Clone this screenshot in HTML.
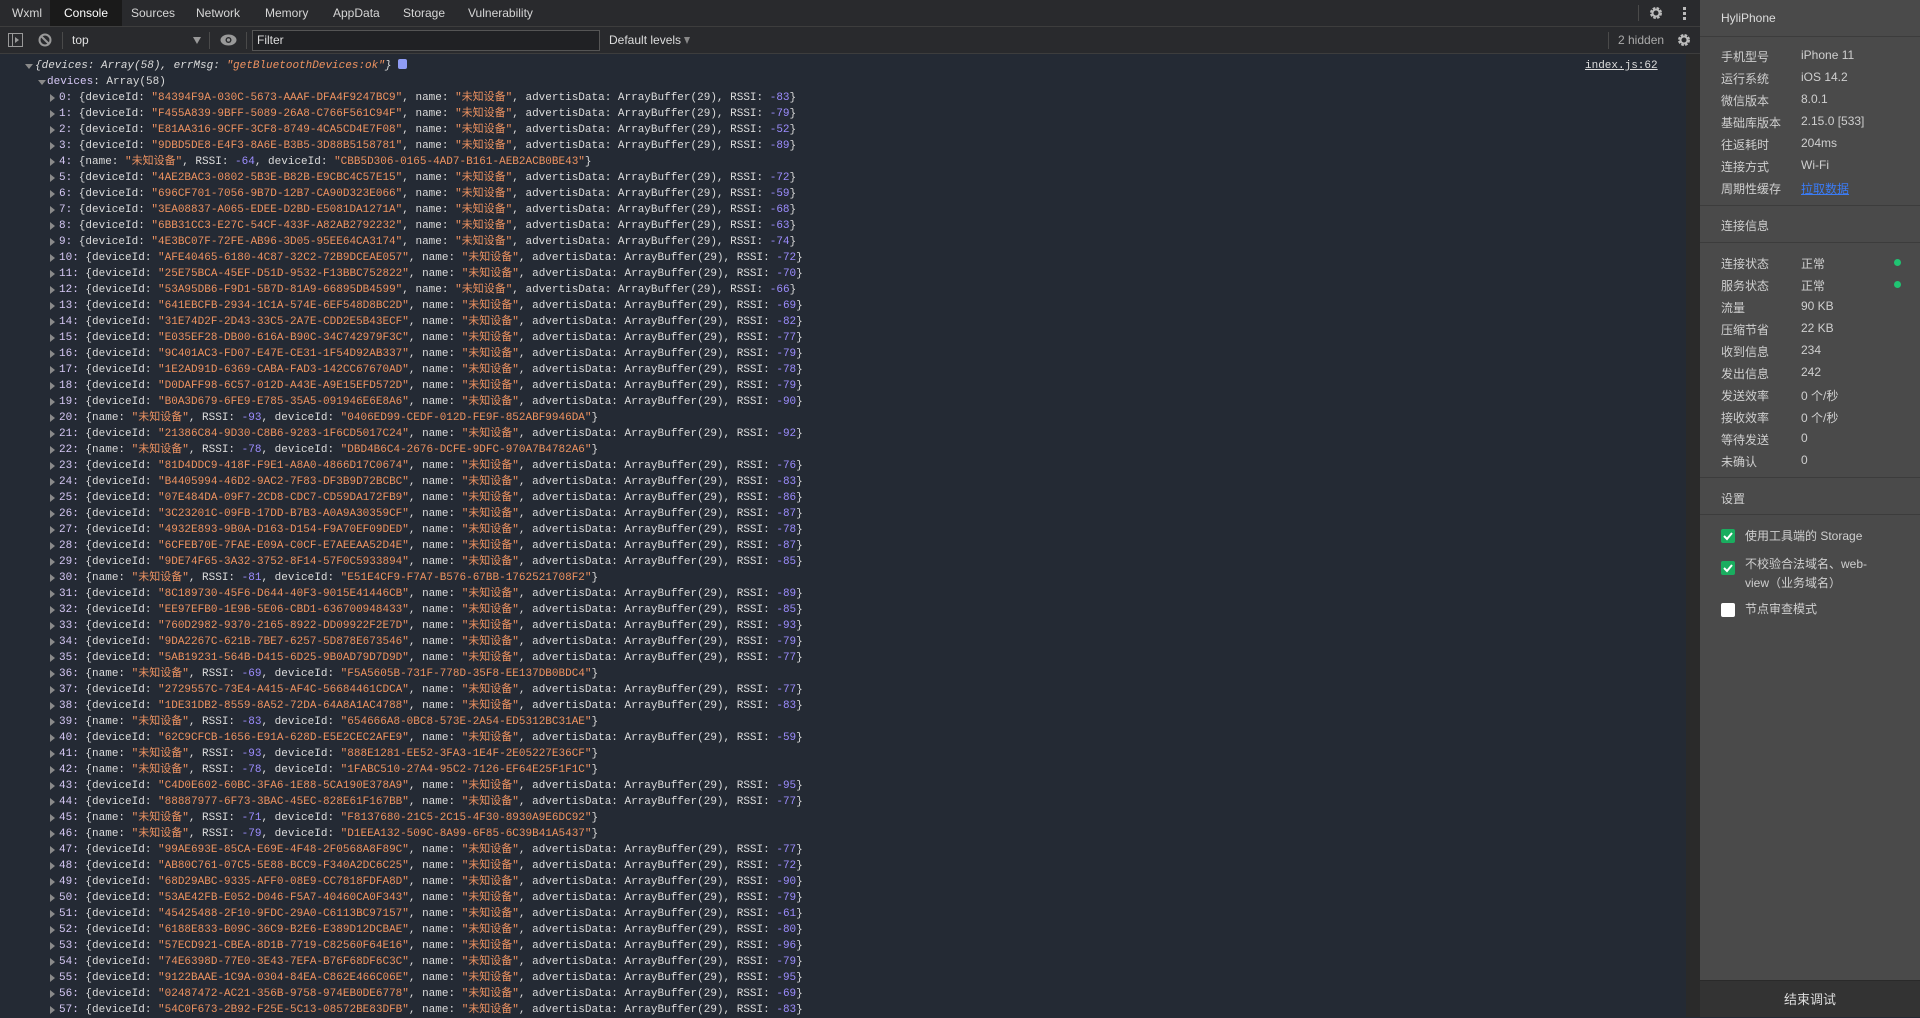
<!DOCTYPE html>
<html><head><meta charset="utf-8"><style>
*{margin:0;padding:0;box-sizing:border-box}
body{width:1920px;height:1017px;overflow:hidden;background:#242a34;font-family:"Liberation Sans","Noto Sans CJK SC",sans-serif;position:relative}
.tabs{position:absolute;left:0;top:0;width:1700px;height:27px;background:#292a2d;border-bottom:1px solid #3d3d3d}
.tab{position:absolute;top:0;height:26px;line-height:27px;font-size:12px;color:#d6d6d6}
.tb{position:absolute;left:0;top:27px;width:1700px;height:27px;background:#292a2d;border-bottom:1px solid #3d3d3d}
.div{position:absolute;width:1px;background:#4a4a4a}
.con{position:absolute;left:0;top:58px;width:1686px;font-family:"Liberation Mono","Noto Sans CJK SC",monospace;font-size:11px;color:#dcdcdc}
.r{height:16px;line-height:16px;white-space:pre;position:relative;padding-left:59px}
.r:before{content:"";position:absolute;left:50px;top:4px;border-left:5px solid #8a8a8a;border-top:4px solid transparent;border-bottom:4px solid transparent}
.i{color:#d6c8f5}.s{color:#ee9260}.n{color:#9d8dff}
.sb{position:absolute;left:1686px;top:54px;width:14px;height:963px;background:#2a2a2a}
.side{position:absolute;left:1700px;top:0;width:220px;height:1017px;background:#4a4a4a;font-size:12px;color:#cfcfcf}
.side .l{position:absolute;left:21px}
.side .v{position:absolute;left:101px}
.hr{position:absolute;left:0;width:220px;height:1px;background:#3c3c3c}
.dot{position:absolute;left:194px;width:7px;height:7px;border-radius:50%;background:#1fc472}
.cb{position:absolute;left:21px;width:14px;height:14px;border-radius:2px;background:#1aad5f}
.cb.w{background:#fff}
</style></head><body>
<div class="tabs">
<div class="tab" style="left:12px">Wxml</div>
<div class="tab" style="left:50px;width:72px;background:#1a1a1a;text-align:center;color:#fff">Console</div>
<div class="tab" style="left:131px">Sources</div>
<div class="tab" style="left:196px">Network</div>
<div class="tab" style="left:265px">Memory</div>
<div class="tab" style="left:333px">AppData</div>
<div class="tab" style="left:403px">Storage</div>
<div class="tab" style="left:468px">Vulnerability</div>
<div class="div" style="left:1638px;top:5px;height:16px"></div>
<svg style="position:absolute;left:1649px;top:6px" width="14" height="14" viewBox="0 0 14 14"><circle cx="7" cy="7" r="4.5" fill="none" stroke="#bbb" stroke-width="3" stroke-dasharray="2.4 1.2"/><circle cx="7" cy="7" r="3.5" fill="none" stroke="#bbb" stroke-width="2"/></svg>
<div style="position:absolute;left:1683px;top:7px;width:3px;height:3px;background:#bbb;box-shadow:0 5px #bbb,0 10px #bbb"></div>
</div>
<div class="tb">
<svg style="position:absolute;left:8px;top:6px" width="15" height="14" viewBox="0 0 15 14"><rect x="0.5" y="0.5" width="14" height="13" fill="none" stroke="#999"/><line x1="4.5" y1="0" x2="4.5" y2="14" stroke="#999"/><path d="M7 4l4 3-4 3z" fill="#999"/></svg>
<svg style="position:absolute;left:38px;top:6px" width="14" height="14" viewBox="0 0 14 14"><circle cx="7" cy="7" r="5.5" fill="none" stroke="#999" stroke-width="2"/><line x1="3" y1="3" x2="11" y2="11" stroke="#999" stroke-width="2"/></svg>
<div class="div" style="left:62px;top:5px;height:17px"></div>
<div style="position:absolute;left:72px;top:6px;font-size:12px;color:#e0e0e0">top</div>
<div style="position:absolute;left:193px;top:10px;border-top:7px solid #999;border-left:4px solid transparent;border-right:4px solid transparent"></div>
<div class="div" style="left:209px;top:5px;height:17px"></div>
<svg style="position:absolute;left:220px;top:7px" width="17" height="12" viewBox="0 0 17 12"><ellipse cx="8.5" cy="6" rx="8" ry="5.5" fill="#999"/><circle cx="8.5" cy="6" r="3" fill="#292a2d"/><circle cx="8.5" cy="6" r="1.6" fill="#999"/></svg>
<div class="div" style="left:246px;top:5px;height:17px"></div>
<div style="position:absolute;left:252px;top:3px;width:348px;height:21px;border:1px solid #555;background:#202124;font-size:12px;color:#ddd;padding-left:4px;line-height:19px">Filter</div>
<div style="position:absolute;left:609px;top:6px;font-size:12px;color:#ddd">Default levels</div>
<div style="position:absolute;left:684px;top:10px;border-top:7px solid #888;border-left:3.5px solid transparent;border-right:3.5px solid transparent"></div>
<div class="div" style="left:1608px;top:5px;height:17px"></div>
<div style="position:absolute;left:1618px;top:6px;font-size:12px;color:#aaa">2 hidden</div>
<svg style="position:absolute;left:1677px;top:6px" width="14" height="14" viewBox="0 0 14 14"><circle cx="7" cy="7" r="4.5" fill="none" stroke="#bbb" stroke-width="3" stroke-dasharray="2.4 1.2"/><circle cx="7" cy="7" r="3.5" fill="none" stroke="#bbb" stroke-width="2"/></svg>
</div>
<div class="sb"></div>
<div style="position:absolute;left:1585px;top:58px;font-family:'Liberation Mono',monospace;font-size:11px;line-height:16px;color:#ddd;text-decoration:underline">index.js:62</div>
<div class="con">
<div style="height:16px;line-height:16px;white-space:pre;padding-left:35px;position:relative;font-style:italic"><span style="position:absolute;left:25px;top:6px;border-top:5px solid #8a8a8a;border-left:4px solid transparent;border-right:4px solid transparent"></span>{devices: Array(58), errMsg: <span class="s">"getBluetoothDevices:ok"</span>} <span style="display:inline-block;width:9px;height:10px;background:#8f9cf5;border-radius:2px;vertical-align:-1px"></span></div>
<div style="height:16px;line-height:16px;white-space:pre;padding-left:47px;position:relative"><span style="position:absolute;left:38px;top:6px;border-top:5px solid #8a8a8a;border-left:4px solid transparent;border-right:4px solid transparent"></span><span class="i">devices</span>: Array(58)</div>
<div class="r"><span class="i">0:</span> {deviceId: <span class="s">"84394F9A-030C-5673-AAAF-DFA4F9247BC9"</span>, name: <span class="s">"未知设备"</span>, advertisData: ArrayBuffer(29), RSSI: <span class="n">-83</span>}</div>
<div class="r"><span class="i">1:</span> {deviceId: <span class="s">"F455A839-9BFF-5089-26A8-C766F561C94F"</span>, name: <span class="s">"未知设备"</span>, advertisData: ArrayBuffer(29), RSSI: <span class="n">-79</span>}</div>
<div class="r"><span class="i">2:</span> {deviceId: <span class="s">"E81AA316-9CFF-3CF8-8749-4CA5CD4E7F08"</span>, name: <span class="s">"未知设备"</span>, advertisData: ArrayBuffer(29), RSSI: <span class="n">-52</span>}</div>
<div class="r"><span class="i">3:</span> {deviceId: <span class="s">"9DBD5DE8-E4F3-8A6E-B3B5-3D88B5158781"</span>, name: <span class="s">"未知设备"</span>, advertisData: ArrayBuffer(29), RSSI: <span class="n">-89</span>}</div>
<div class="r"><span class="i">4:</span> {name: <span class="s">"未知设备"</span>, RSSI: <span class="n">-64</span>, deviceId: <span class="s">"CBB5D306-0165-4AD7-B161-AEB2ACB0BE43"</span>}</div>
<div class="r"><span class="i">5:</span> {deviceId: <span class="s">"4AE2BAC3-0802-5B3E-B82B-E9CBC4C57E15"</span>, name: <span class="s">"未知设备"</span>, advertisData: ArrayBuffer(29), RSSI: <span class="n">-72</span>}</div>
<div class="r"><span class="i">6:</span> {deviceId: <span class="s">"696CF701-7056-9B7D-12B7-CA90D323E066"</span>, name: <span class="s">"未知设备"</span>, advertisData: ArrayBuffer(29), RSSI: <span class="n">-59</span>}</div>
<div class="r"><span class="i">7:</span> {deviceId: <span class="s">"3EA08837-A065-EDEE-D2BD-E5081DA1271A"</span>, name: <span class="s">"未知设备"</span>, advertisData: ArrayBuffer(29), RSSI: <span class="n">-68</span>}</div>
<div class="r"><span class="i">8:</span> {deviceId: <span class="s">"6BB31CC3-E27C-54CF-433F-A82AB2792232"</span>, name: <span class="s">"未知设备"</span>, advertisData: ArrayBuffer(29), RSSI: <span class="n">-63</span>}</div>
<div class="r"><span class="i">9:</span> {deviceId: <span class="s">"4E3BC07F-72FE-AB96-3D05-95EE64CA3174"</span>, name: <span class="s">"未知设备"</span>, advertisData: ArrayBuffer(29), RSSI: <span class="n">-74</span>}</div>
<div class="r"><span class="i">10:</span> {deviceId: <span class="s">"AFE40465-6180-4C87-32C2-72B9DCEAE057"</span>, name: <span class="s">"未知设备"</span>, advertisData: ArrayBuffer(29), RSSI: <span class="n">-72</span>}</div>
<div class="r"><span class="i">11:</span> {deviceId: <span class="s">"25E75BCA-45EF-D51D-9532-F13BBC752822"</span>, name: <span class="s">"未知设备"</span>, advertisData: ArrayBuffer(29), RSSI: <span class="n">-70</span>}</div>
<div class="r"><span class="i">12:</span> {deviceId: <span class="s">"53A95DB6-F9D1-5B7D-81A9-66895DB4599"</span>, name: <span class="s">"未知设备"</span>, advertisData: ArrayBuffer(29), RSSI: <span class="n">-66</span>}</div>
<div class="r"><span class="i">13:</span> {deviceId: <span class="s">"641EBCFB-2934-1C1A-574E-6EF548D8BC2D"</span>, name: <span class="s">"未知设备"</span>, advertisData: ArrayBuffer(29), RSSI: <span class="n">-69</span>}</div>
<div class="r"><span class="i">14:</span> {deviceId: <span class="s">"31E74D2F-2D43-33C5-2A7E-CDD2E5B43ECF"</span>, name: <span class="s">"未知设备"</span>, advertisData: ArrayBuffer(29), RSSI: <span class="n">-82</span>}</div>
<div class="r"><span class="i">15:</span> {deviceId: <span class="s">"E035EF28-DB00-616A-B90C-34C742979F3C"</span>, name: <span class="s">"未知设备"</span>, advertisData: ArrayBuffer(29), RSSI: <span class="n">-77</span>}</div>
<div class="r"><span class="i">16:</span> {deviceId: <span class="s">"9C401AC3-FD07-E47E-CE31-1F54D92AB337"</span>, name: <span class="s">"未知设备"</span>, advertisData: ArrayBuffer(29), RSSI: <span class="n">-79</span>}</div>
<div class="r"><span class="i">17:</span> {deviceId: <span class="s">"1E2AD91D-6369-CABA-FAD3-142CC67670AD"</span>, name: <span class="s">"未知设备"</span>, advertisData: ArrayBuffer(29), RSSI: <span class="n">-78</span>}</div>
<div class="r"><span class="i">18:</span> {deviceId: <span class="s">"D0DAFF98-6C57-012D-A43E-A9E15EFD572D"</span>, name: <span class="s">"未知设备"</span>, advertisData: ArrayBuffer(29), RSSI: <span class="n">-79</span>}</div>
<div class="r"><span class="i">19:</span> {deviceId: <span class="s">"B0A3D679-6FE9-E785-35A5-091946E6E8A6"</span>, name: <span class="s">"未知设备"</span>, advertisData: ArrayBuffer(29), RSSI: <span class="n">-90</span>}</div>
<div class="r"><span class="i">20:</span> {name: <span class="s">"未知设备"</span>, RSSI: <span class="n">-93</span>, deviceId: <span class="s">"0406ED99-CEDF-012D-FE9F-852ABF9946DA"</span>}</div>
<div class="r"><span class="i">21:</span> {deviceId: <span class="s">"21386C84-9D30-C8B6-9283-1F6CD5017C24"</span>, name: <span class="s">"未知设备"</span>, advertisData: ArrayBuffer(29), RSSI: <span class="n">-92</span>}</div>
<div class="r"><span class="i">22:</span> {name: <span class="s">"未知设备"</span>, RSSI: <span class="n">-78</span>, deviceId: <span class="s">"DBD4B6C4-2676-DCFE-9DFC-970A7B4782A6"</span>}</div>
<div class="r"><span class="i">23:</span> {deviceId: <span class="s">"81D4DDC9-418F-F9E1-A8A0-4866D17C0674"</span>, name: <span class="s">"未知设备"</span>, advertisData: ArrayBuffer(29), RSSI: <span class="n">-76</span>}</div>
<div class="r"><span class="i">24:</span> {deviceId: <span class="s">"B4405994-46D2-9AC2-7F83-DF3B9D72BCBC"</span>, name: <span class="s">"未知设备"</span>, advertisData: ArrayBuffer(29), RSSI: <span class="n">-83</span>}</div>
<div class="r"><span class="i">25:</span> {deviceId: <span class="s">"07E484DA-09F7-2CD8-CDC7-CD59DA172FB9"</span>, name: <span class="s">"未知设备"</span>, advertisData: ArrayBuffer(29), RSSI: <span class="n">-86</span>}</div>
<div class="r"><span class="i">26:</span> {deviceId: <span class="s">"3C23201C-09FB-17DD-B7B3-A0A9A30359CF"</span>, name: <span class="s">"未知设备"</span>, advertisData: ArrayBuffer(29), RSSI: <span class="n">-87</span>}</div>
<div class="r"><span class="i">27:</span> {deviceId: <span class="s">"4932E893-9B0A-D163-D154-F9A70EF09DED"</span>, name: <span class="s">"未知设备"</span>, advertisData: ArrayBuffer(29), RSSI: <span class="n">-78</span>}</div>
<div class="r"><span class="i">28:</span> {deviceId: <span class="s">"6CFEB70E-7FAE-E09A-C0CF-E7AEEAA52D4E"</span>, name: <span class="s">"未知设备"</span>, advertisData: ArrayBuffer(29), RSSI: <span class="n">-87</span>}</div>
<div class="r"><span class="i">29:</span> {deviceId: <span class="s">"9DE74F65-3A32-3752-8F14-57F0C5933894"</span>, name: <span class="s">"未知设备"</span>, advertisData: ArrayBuffer(29), RSSI: <span class="n">-85</span>}</div>
<div class="r"><span class="i">30:</span> {name: <span class="s">"未知设备"</span>, RSSI: <span class="n">-81</span>, deviceId: <span class="s">"E51E4CF9-F7A7-B576-67BB-1762521708F2"</span>}</div>
<div class="r"><span class="i">31:</span> {deviceId: <span class="s">"8C189730-45F6-D644-40F3-9015E41446CB"</span>, name: <span class="s">"未知设备"</span>, advertisData: ArrayBuffer(29), RSSI: <span class="n">-89</span>}</div>
<div class="r"><span class="i">32:</span> {deviceId: <span class="s">"EE97EFB0-1E9B-5E06-CBD1-636700948433"</span>, name: <span class="s">"未知设备"</span>, advertisData: ArrayBuffer(29), RSSI: <span class="n">-85</span>}</div>
<div class="r"><span class="i">33:</span> {deviceId: <span class="s">"760D2982-9370-2165-8922-DD09922F2E7D"</span>, name: <span class="s">"未知设备"</span>, advertisData: ArrayBuffer(29), RSSI: <span class="n">-93</span>}</div>
<div class="r"><span class="i">34:</span> {deviceId: <span class="s">"9DA2267C-621B-7BE7-6257-5D878E673546"</span>, name: <span class="s">"未知设备"</span>, advertisData: ArrayBuffer(29), RSSI: <span class="n">-79</span>}</div>
<div class="r"><span class="i">35:</span> {deviceId: <span class="s">"5AB19231-564B-D415-6D25-9B0AD79D7D9D"</span>, name: <span class="s">"未知设备"</span>, advertisData: ArrayBuffer(29), RSSI: <span class="n">-77</span>}</div>
<div class="r"><span class="i">36:</span> {name: <span class="s">"未知设备"</span>, RSSI: <span class="n">-69</span>, deviceId: <span class="s">"F5A5605B-731F-778D-35F8-EE137DB0BDC4"</span>}</div>
<div class="r"><span class="i">37:</span> {deviceId: <span class="s">"2729557C-73E4-A415-AF4C-56684461CDCA"</span>, name: <span class="s">"未知设备"</span>, advertisData: ArrayBuffer(29), RSSI: <span class="n">-77</span>}</div>
<div class="r"><span class="i">38:</span> {deviceId: <span class="s">"1DE31DB2-8559-8A52-72DA-64A8A1AC4788"</span>, name: <span class="s">"未知设备"</span>, advertisData: ArrayBuffer(29), RSSI: <span class="n">-83</span>}</div>
<div class="r"><span class="i">39:</span> {name: <span class="s">"未知设备"</span>, RSSI: <span class="n">-83</span>, deviceId: <span class="s">"654666A8-0BC8-573E-2A54-ED5312BC31AE"</span>}</div>
<div class="r"><span class="i">40:</span> {deviceId: <span class="s">"62C9CFCB-1656-E91A-628D-E5E2CEC2AFE9"</span>, name: <span class="s">"未知设备"</span>, advertisData: ArrayBuffer(29), RSSI: <span class="n">-59</span>}</div>
<div class="r"><span class="i">41:</span> {name: <span class="s">"未知设备"</span>, RSSI: <span class="n">-93</span>, deviceId: <span class="s">"888E1281-EE52-3FA3-1E4F-2E05227E36CF"</span>}</div>
<div class="r"><span class="i">42:</span> {name: <span class="s">"未知设备"</span>, RSSI: <span class="n">-78</span>, deviceId: <span class="s">"1FABC510-27A4-95C2-7126-EF64E25F1F1C"</span>}</div>
<div class="r"><span class="i">43:</span> {deviceId: <span class="s">"C4D0E602-60BC-3FA6-1E88-5CA190E378A9"</span>, name: <span class="s">"未知设备"</span>, advertisData: ArrayBuffer(29), RSSI: <span class="n">-95</span>}</div>
<div class="r"><span class="i">44:</span> {deviceId: <span class="s">"88887977-6F73-3BAC-45EC-828E61F167BB"</span>, name: <span class="s">"未知设备"</span>, advertisData: ArrayBuffer(29), RSSI: <span class="n">-77</span>}</div>
<div class="r"><span class="i">45:</span> {name: <span class="s">"未知设备"</span>, RSSI: <span class="n">-71</span>, deviceId: <span class="s">"F8137680-21C5-2C15-4F30-8930A9E6DC92"</span>}</div>
<div class="r"><span class="i">46:</span> {name: <span class="s">"未知设备"</span>, RSSI: <span class="n">-79</span>, deviceId: <span class="s">"D1EEA132-509C-8A99-6F85-6C39B41A5437"</span>}</div>
<div class="r"><span class="i">47:</span> {deviceId: <span class="s">"99AE693E-85CA-E69E-4F48-2F0568A8F89C"</span>, name: <span class="s">"未知设备"</span>, advertisData: ArrayBuffer(29), RSSI: <span class="n">-77</span>}</div>
<div class="r"><span class="i">48:</span> {deviceId: <span class="s">"AB80C761-07C5-5E88-BCC9-F340A2DC6C25"</span>, name: <span class="s">"未知设备"</span>, advertisData: ArrayBuffer(29), RSSI: <span class="n">-72</span>}</div>
<div class="r"><span class="i">49:</span> {deviceId: <span class="s">"68D29ABC-9335-AFF0-08E9-CC7818FDFA8D"</span>, name: <span class="s">"未知设备"</span>, advertisData: ArrayBuffer(29), RSSI: <span class="n">-90</span>}</div>
<div class="r"><span class="i">50:</span> {deviceId: <span class="s">"53AE42FB-E052-D046-F5A7-40460CA0F343"</span>, name: <span class="s">"未知设备"</span>, advertisData: ArrayBuffer(29), RSSI: <span class="n">-79</span>}</div>
<div class="r"><span class="i">51:</span> {deviceId: <span class="s">"45425488-2F10-9FDC-29A0-C6113BC97157"</span>, name: <span class="s">"未知设备"</span>, advertisData: ArrayBuffer(29), RSSI: <span class="n">-61</span>}</div>
<div class="r"><span class="i">52:</span> {deviceId: <span class="s">"6188E833-B09C-36C9-B2E6-E389D12DCBAE"</span>, name: <span class="s">"未知设备"</span>, advertisData: ArrayBuffer(29), RSSI: <span class="n">-80</span>}</div>
<div class="r"><span class="i">53:</span> {deviceId: <span class="s">"57ECD921-CBEA-8D1B-7719-C82560F64E16"</span>, name: <span class="s">"未知设备"</span>, advertisData: ArrayBuffer(29), RSSI: <span class="n">-96</span>}</div>
<div class="r"><span class="i">54:</span> {deviceId: <span class="s">"74E6398D-77E0-3E43-7EFA-B76F68DF6C3C"</span>, name: <span class="s">"未知设备"</span>, advertisData: ArrayBuffer(29), RSSI: <span class="n">-79</span>}</div>
<div class="r"><span class="i">55:</span> {deviceId: <span class="s">"9122BAAE-1C9A-0304-84EA-C862E466C06E"</span>, name: <span class="s">"未知设备"</span>, advertisData: ArrayBuffer(29), RSSI: <span class="n">-95</span>}</div>
<div class="r"><span class="i">56:</span> {deviceId: <span class="s">"02487472-AC21-356B-9758-974EB0DE6778"</span>, name: <span class="s">"未知设备"</span>, advertisData: ArrayBuffer(29), RSSI: <span class="n">-69</span>}</div>
<div class="r"><span class="i">57:</span> {deviceId: <span class="s">"54C0F673-2B92-F25E-5C13-08572BE83DFB"</span>, name: <span class="s">"未知设备"</span>, advertisData: ArrayBuffer(29), RSSI: <span class="n">-83</span>}</div>
</div>
<div class="side">
<div class="l" style="top:11px;color:#ddd">HyliPhone</div>
<div class="hr" style="top:36px"></div>
<div class="l" style="top:48px">手机型号</div><div class="v" style="top:48px">iPhone 11</div>
<div class="l" style="top:70px">运行系统</div><div class="v" style="top:70px">iOS 14.2</div>
<div class="l" style="top:92px">微信版本</div><div class="v" style="top:92px">8.0.1</div>
<div class="l" style="top:114px">基础库版本</div><div class="v" style="top:114px">2.15.0 [533]</div>
<div class="l" style="top:136px">往返耗时</div><div class="v" style="top:136px">204ms</div>
<div class="l" style="top:158px">连接方式</div><div class="v" style="top:158px">Wi-Fi</div>
<div class="l" style="top:180px">周期性缓存</div><div class="v" style="top:180px;color:#3a7bf5;text-decoration:underline">拉取数据</div>
<div class="hr" style="top:205px"></div>
<div class="l" style="top:217px">连接信息</div>
<div class="hr" style="top:242px"></div>
<div class="l" style="top:255px">连接状态</div><div class="v" style="top:255px">正常</div><div class="dot" style="top:259px"></div>
<div class="l" style="top:277px">服务状态</div><div class="v" style="top:277px">正常</div><div class="dot" style="top:281px"></div>
<div class="l" style="top:299px">流量</div><div class="v" style="top:299px">90 KB</div>
<div class="l" style="top:321px">压缩节省</div><div class="v" style="top:321px">22 KB</div>
<div class="l" style="top:343px">收到信息</div><div class="v" style="top:343px">234</div>
<div class="l" style="top:365px">发出信息</div><div class="v" style="top:365px">242</div>
<div class="l" style="top:387px">发送效率</div><div class="v" style="top:387px">0 个/秒</div>
<div class="l" style="top:409px">接收效率</div><div class="v" style="top:409px">0 个/秒</div>
<div class="l" style="top:431px">等待发送</div><div class="v" style="top:431px">0</div>
<div class="l" style="top:453px">未确认</div><div class="v" style="top:453px">0</div>
<div class="hr" style="top:477px"></div>
<div class="l" style="top:490px">设置</div>
<div class="hr" style="top:514px"></div>
<div class="cb" style="top:529px"><svg width="14" height="14"><path d="M3 7l3 3 5-6" fill="none" stroke="#fff" stroke-width="2"/></svg></div>
<div style="position:absolute;left:45px;top:527px">使用工具端的 Storage</div>
<div class="cb" style="top:561px"><svg width="14" height="14"><path d="M3 7l3 3 5-6" fill="none" stroke="#fff" stroke-width="2"/></svg></div>
<div style="position:absolute;left:45px;top:555px;line-height:19px;width:140px">不校验合法域名、web-view（业务域名）</div>
<div class="cb w" style="top:603px"></div>
<div style="position:absolute;left:45px;top:600px">节点审查模式</div>
<div style="position:absolute;left:0;top:980px;width:220px;height:37px;background:#333;border-top:1px solid #2a2a2a;text-align:center;line-height:37px;font-size:13px;color:#ddd">结束调试</div>
</div>
</body></html>
